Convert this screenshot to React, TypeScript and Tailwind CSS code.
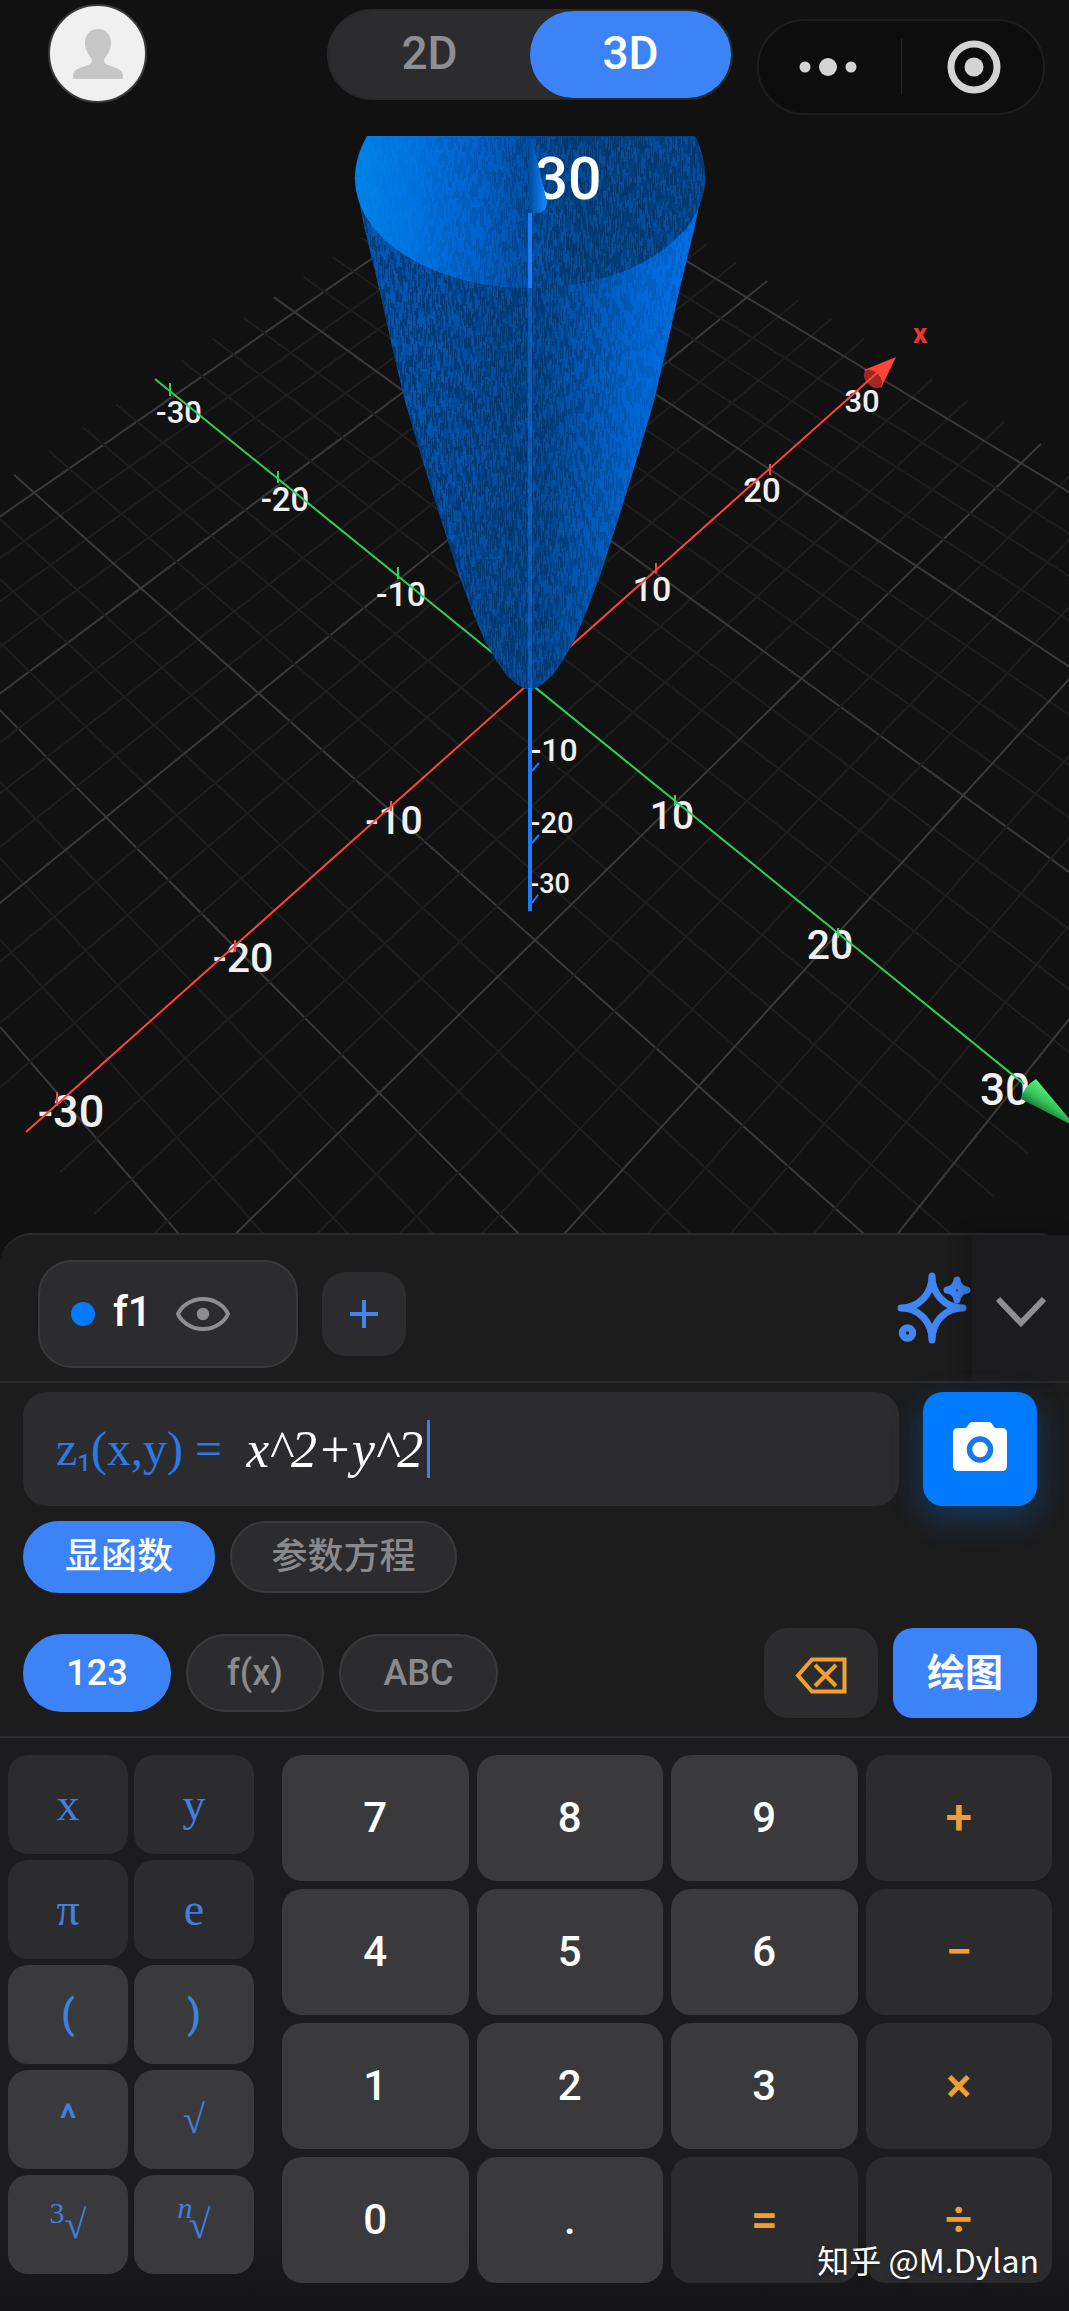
import { useState } from "react";
import clsx from "clsx";

type Key = { label: string; tone: "dark" | "light"; kind: "letter" | "sign" | "root"; sup?: string };

const symbolKeys: Key[] = [
  { label: "x", tone: "dark", kind: "letter" },
  { label: "y", tone: "dark", kind: "letter" },
  { label: "π", tone: "dark", kind: "letter" },
  { label: "e", tone: "dark", kind: "letter" },
  { label: "(", tone: "light", kind: "sign" },
  { label: ")", tone: "light", kind: "sign" },
  { label: "^", tone: "light", kind: "sign" },
  { label: "√", tone: "light", kind: "root" },
  { label: "√", tone: "light", kind: "root", sup: "3" },
  { label: "√", tone: "light", kind: "root", sup: "n" },
];

const numberKeys = ["7", "8", "9", "+", "4", "5", "6", "−", "1", "2", "3", "×", "0", ".", "=", "÷"];
const operators = ["+", "−", "×", "÷", "="];

// ground plane point (X, Y, 0) to screen
function project(x: number, y: number) {
  const w = 1 + 0.0048 * x - 0.0052 * y;
  return [529 + (13.3 * x + 13.84 * y) / w, 686 + (-11.8 * x + 11.07 * y) / w];
}

const RANGE = 32;
const gridSteps = Array.from({ length: 25 }, (_, i) => (i - 12) * 2.5).filter((v) => v !== 0);

const axisLabels = [
  { text: "-30", x: 179, y: 412, size: 31 },
  { text: "-20", x: 285, y: 499, size: 33 },
  { text: "-10", x: 401, y: 594, size: 34 },
  { text: "30", x: 862, y: 401, size: 31 },
  { text: "20", x: 762, y: 490, size: 33 },
  { text: "10", x: 652, y: 589, size: 34 },
  { text: "-10", x: 554, y: 749, size: 32 },
  { text: "-20", x: 552, y: 823, size: 29 },
  { text: "-30", x: 550, y: 883, size: 27 },
  { text: "-10", x: 394, y: 820, size: 39 },
  { text: "-20", x: 243, y: 957, size: 41 },
  { text: "-30", x: 71, y: 1111, size: 45 },
  { text: "10", x: 672, y: 815, size: 39 },
  { text: "20", x: 830, y: 944, size: 41 },
  { text: "30", x: 1005, y: 1089, size: 44 },
];

// half width of the paraboloid at a given height
const profile = [
  [177, 175], [228, 165], [294, 149], [348, 137], [403, 124], [457, 108], [515, 90],
  [574, 71], [614, 56], [640, 45], [661, 33], [675, 23], [684, 13], [688, 6], [690, 0],
];

const body =
  "M" +
  profile.map(([y, w]) => `${529.5 - w} ${y}`).join("L") +
  "L" +
  [...profile].reverse().map(([y, w]) => `${529.5 + w} ${y}`).join("L") +
  "Z";
const opening = "M367 136C359 150 355 164 355 178C355 239 433 288 530 288C627 288 705 239 705 178C705 162 701 148 695 136Z";

function noise(n: number) {
  const s = Math.sin(n * 127.1 + 11.7) * 43758.5453;
  return s - Math.floor(s);
}

const streaks = Array.from({ length: 176 }, (_, i) => ({
  x: 355 + i * 2,
  dash: Array.from({ length: 8 }, (_, j) => Math.round(3 + noise(i * 8 + j) * 20)).join(" "),
  offset: Math.round(noise(i + 3000) * 90),
}));

function Plot() {
  return (
    <svg viewBox="0 136 1069 1097" className="block w-full" role="img" aria-label="z = x^2 + y^2">
      <defs>
        <linearGradient id="outer" x1="0" x2="1">
          <stop offset="0" stopColor="#0052ac" />
          <stop offset="0.25" stopColor="#004a9a" />
          <stop offset="0.45" stopColor="#003f80" />
          <stop offset="0.54" stopColor="#004388" />
          <stop offset="0.66" stopColor="#0056b0" />
          <stop offset="0.8" stopColor="#0066d4" />
          <stop offset="1" stopColor="#0072ec" />
        </linearGradient>
        <linearGradient id="inner" x1="0" x2="1">
          <stop offset="0" stopColor="#0084ea" />
          <stop offset="0.2" stopColor="#0072e0" />
          <stop offset="0.36" stopColor="#0061cc" />
          <stop offset="0.5" stopColor="#004c9c" />
          <stop offset="0.65" stopColor="#003f7c" />
          <stop offset="1" stopColor="#004288" />
        </linearGradient>
        {/* streaks fade out on the lit side */}
        <linearGradient id="outerFade" gradientUnits="userSpaceOnUse" x1="355" x2="705">
          <stop offset="0" stopColor="#fff" stopOpacity="0.7" />
          <stop offset="0.5" stopColor="#fff" stopOpacity="0.7" />
          <stop offset="0.8" stopColor="#fff" stopOpacity="0.2" />
        </linearGradient>
        <linearGradient id="innerFade" gradientUnits="userSpaceOnUse" x1="355" x2="705">
          <stop offset="0.15" stopColor="#fff" stopOpacity="0.05" />
          <stop offset="0.4" stopColor="#fff" stopOpacity="0.3" />
          <stop offset="0.6" stopColor="#fff" stopOpacity="0.7" />
        </linearGradient>
        <linearGradient id="cone" x1="0" x2="1">
          <stop offset="0" stopColor="#004a9c" />
          <stop offset="0.9" stopColor="#1284ff" />
        </linearGradient>
        <linearGradient id="yCone" gradientUnits="userSpaceOnUse" x1="1048" y1="1088" x2="1034" y2="1110">
          <stop offset="0" stopColor="#5be884" />
          <stop offset="0.5" stopColor="#34c759" />
          <stop offset="1" stopColor="#17692c" />
        </linearGradient>
        <mask id="outerMask">
          <path d={body} fill="url(#outerFade)" />
        </mask>
        <mask id="innerMask">
          <path d={opening} fill="url(#innerFade)" />
        </mask>
        <g id="streaks" strokeWidth="2">
          {streaks.map((s) => (
            <g key={s.x}>
              <line x1={s.x} x2={s.x} y1="137" y2="690" stroke="#00356a" strokeDasharray={s.dash} strokeDashoffset={s.offset} />
              <line x1={s.x + 1} x2={s.x + 1} y1="137" y2="690" strokeWidth="1" stroke="#0a68cc" strokeDasharray={s.dash} strokeDashoffset={s.offset + 35} />
            </g>
          ))}
        </g>
      </defs>

      {gridSteps.map((v) => {
        const major = v % 10 === 0;
        const [ax, ay] = project(v, -RANGE);
        const [bx, by] = project(v, RANGE);
        const [cx, cy] = project(-RANGE, v);
        const [dx, dy] = project(RANGE, v);
        return (
          <g key={v} stroke={major ? "#3a3a3a" : "#1f1f1f"} strokeWidth="2">
            <line x1={ax} y1={ay} x2={bx} y2={by} />
            <line x1={cx} y1={cy} x2={dx} y2={dy} />
          </g>
        );
      })}

      <g fill="#f0f0f0" fontFamily="Roboto, sans-serif" fontWeight="500" textAnchor="middle">
        {axisLabels.map((l) => (
          <text key={`${l.x}-${l.y}`} x={l.x} y={l.y + l.size * 0.36} fontSize={l.size}>
            {l.text}
          </text>
        ))}
        <text x="920" y="343" fontSize="28" fontWeight="700" fill="#e8382f">x</text>
      </g>

      <path d="M896 357L864 370L881 388Z" fill="#ff453a" />
      <ellipse cx="873" cy="379" rx="7" ry="11" transform="rotate(-45 873 379)" fill="#9e2922" />
      <g stroke="#ff453a" strokeWidth="2">
        <line x1="26" y1="1132" x2="878" y2="372" />
        {[[656, 563, 573], [770, 464, 475], [391, 801, 811], [235, 940, 952], [57, 1092, 1106]].map(([x, y1, y2]) => (
          <line key={x} x1={x} y1={y1} x2={x} y2={y2} />
        ))}
      </g>

      <g stroke="#30d158" strokeWidth="2">
        <line x1="155" y1="379" x2="1024" y2="1084" />
        {[[170, 383, 396], [278, 471, 483], [398, 567, 579], [675, 795, 806], [838, 928, 938]].map(([x, y1, y2]) => (
          <line key={x} x1={x} y1={y1} x2={x} y2={y2} />
        ))}
      </g>
      <path d="M1036 1079Q1024 1086 1021 1099L1076 1127Z" fill="url(#yCone)" />

      <path d={body} fill="url(#outer)" />
      <use href="#streaks" mask="url(#outerMask)" />
      <path d={opening} fill="url(#inner)" />
      <use href="#streaks" mask="url(#innerMask)" />

      <text x="568" y="199" fontSize="59" fontWeight="500" fill="#fff" fontFamily="Roboto, sans-serif" textAnchor="middle">30</text>
      <path d="M529 138L532 138L547 202Q547 212 538 213L529 213Z" fill="url(#cone)" />
      <g stroke="#1a7bff" strokeWidth="4">
        <line x1="530" y1="213" x2="530" y2="288" />
        <line x1="530" y1="288" x2="530" y2="688" opacity="0.4" />
        <line x1="530" y1="688" x2="530" y2="911" />
      </g>
      <path d="M532 771l7-8M532 843l7-8M532 903l6-8" stroke="#1a7bff" strokeWidth="2" />
    </svg>
  );
}

function TopBar() {
  const [mode, setMode] = useState("3D");
  return (
    <header className="flex h-[136px] items-start gap-6 pr-6 pl-12">
      <button aria-label="Profile" className="mt-1 flex size-[99px] items-center justify-center rounded-full border-2 border-[#3a3a3c] bg-[#f0f0f0]">
        <svg viewBox="0 0 50 50" className="size-[50px]" fill="#c6c6c6">
          <path d="M25 0C17 0 12 6 12 14c0 6 3 11 6 15 2 3 0 6-3 7C7 39 0 40 0 47v3h50v-3c0-7-7-8-15-11-3-1-5-4-3-7 3-4 6-9 6-15C38 6 33 0 25 0Z" />
        </svg>
      </button>
      <div className="mt-[9px] ml-auto flex h-[91px] w-[406px] rounded-full border-2 border-[#29292b] bg-[#2c2c2e]">
        {["2D", "3D"].map((m) => (
          <button
            key={m}
            onClick={() => setMode(m)}
            className={clsx(
              "flex-1 rounded-full pb-1 text-[46px] leading-none font-medium",
              mode === m ? "bg-[#3c83f8] text-white" : "text-[#8e8e93]"
            )}
          >
            {m}
          </button>
        ))}
      </div>
      <div className="mt-[19px] flex h-24 w-72 items-center rounded-full border-2 border-[#1e1e1e] bg-[#0d0d0d]">
        <button aria-label="More" className="flex h-full flex-1 items-center justify-center pr-1">
          <svg viewBox="0 0 58 20" className="h-5 w-[58px]" fill="#d4d4d4">
            <circle cx="6" cy="10" r="5.5" />
            <circle cx="29" cy="10" r="9" />
            <circle cx="52" cy="10" r="5.5" />
          </svg>
        </button>
        <span className="h-14 w-px bg-[#2a2a2a]" />
        <button aria-label="Close" className="flex h-full flex-1 items-center justify-center pl-1">
          <svg viewBox="0 0 54 54" className="size-[54px]">
            <circle cx="27" cy="27" r="23" fill="none" stroke="#d4d4d4" strokeWidth="7" />
            <circle cx="27" cy="27" r="9.5" fill="#d4d4d4" />
          </svg>
        </button>
      </div>
    </header>
  );
}

function FunctionTabs() {
  return (
    <div className="flex h-[150px] items-center rounded-t-[32px] border-y-2 border-[#2c2c2e]">
      <div className="mt-3 ml-[38px] flex h-[108px] w-[260px] items-center rounded-[34px] border-2 border-[#39393b] bg-[#2c2c2e] pl-[31px]">
        <span className="size-6 rounded-full bg-[#007aff]" />
        <span className="ml-[18px] pb-1 text-[42px] leading-none font-medium text-white">f1</span>
        <button aria-label="Toggle visibility" className="ml-6">
          <svg viewBox="0 0 54 34" className="h-[34px] w-[54px]">
            <path d="M2 17C5 10 14 2 27 2s22 8 25 15C49 24 40 32 27 32S5 24 2 17Z" fill="none" stroke="#8e8e90" strokeWidth="4" strokeLinejoin="round" />
            <circle cx="27" cy="17" r="6.2" fill="#8e8e90" />
          </svg>
        </button>
      </div>
      <button aria-label="Add function" className="mt-3 ml-6 flex size-[84px] items-center justify-center rounded-3xl bg-[#2c2c2e]">
        <svg viewBox="0 0 28 28" className="size-7" stroke="#4484f0" strokeWidth="4">
          <path d="M14 0v28M0 14h28" />
        </svg>
      </button>
      <button aria-label="AI assistant" className="ml-auto">
        <svg viewBox="0 0 75 72" className="h-[72px] w-[75px]" fill="none" stroke="#4285f4" strokeWidth="7" strokeLinejoin="round" strokeLinecap="round">
          <path d="M35 4C35 22 22 36 4 36C22 36 35 50 35 68C35 50 48 36 66 36C48 36 35 22 35 4Z" />
          <path d="M60 8Q59 17 50 18Q59 19 60 28Q61 19 70 18Q61 17 60 8Z" />
          <circle cx="10.500" cy="61" r="5.200" />
        </svg>
      </button>
      <button aria-label="Collapse" className="flex h-full w-[97px] items-center justify-center bg-[#1c1c1e] pt-2 shadow-[-8px_0_16px_rgba(0,0,0,0.25)]">
        <svg viewBox="0 0 52 32" className="h-8 w-[52px]" fill="none" stroke="#8e8e93" strokeWidth="6">
          <path d="M3 3l23 24L49 3" />
        </svg>
      </button>
    </div>
  );
}

function Pill({ label, active, className, onClick }: { label: string; active: boolean; className: string; onClick: () => void }) {
  return (
    <button
      onClick={onClick}
      className={clsx(
        "rounded-full border-2 text-4xl font-medium",
        active ? "border-[#3c83f8] bg-[#3c83f8] text-white" : "border-[#3a3a3c] bg-[#2c2c2e] text-[#8a8a8c]",
        className
      )}
    >
      {label}
    </button>
  );
}

function Editor() {
  const [kind, setKind] = useState("显函数");
  const [expr, setExpr] = useState("x^2+y^2");
  return (
    <div className="px-[23px] pt-[9px]">
      <div className="flex gap-6 pr-[9px]">
        <div className="flex h-[114px] flex-1 items-center rounded-3xl bg-[#2c2c2e] pl-[33px] font-['Liberation_Serif',serif]">
          <label htmlFor="expr" className="text-5xl leading-none whitespace-pre text-[#2a7ae8]">
            z<sub className="font-['Roboto',sans-serif] text-2xl font-medium">1</sub>(x,y) =
          </label>
          <input
            id="expr"
            value={expr}
            onChange={(e) => setExpr(e.target.value)}
            className="ml-6 field-sizing-content bg-transparent text-[52px] leading-none text-white italic outline-none"
          />
          <span className="ml-1 h-[58px] w-[3px] bg-[#3f7fe8]" />
        </div>
        <button aria-label="Scan formula" className="flex size-[114px] items-center justify-center rounded-[20px] bg-[#007aff] pb-1 shadow-[0_12px_32px_rgba(0,122,255,0.3)]">
          <svg viewBox="0 0 54 50" className="h-[50px] w-[54px]">
            <path d="M19 0h17q2 0 3 2l3 4h7q5 0 5 5v33q0 5-5 5H5q-5 0-5-5V11q0-5 5-5h8l3-4q1-2 3-2Z" fill="#fff" />
            <circle cx="27" cy="27.500" r="10.500" fill="none" stroke="#1678ee" strokeWidth="5.500" />
          </svg>
        </button>
      </div>
      <div className="mt-[15px] flex gap-[15px]">
        <Pill label="显函数" active={kind === "显函数"} onClick={() => setKind("显函数")} className="h-[72px] w-48" />
        <Pill label="参数方程" active={kind === "参数方程"} onClick={() => setKind("参数方程")} className="h-[72px] w-[227px]" />
      </div>
    </div>
  );
}

function KeyboardTabs() {
  const [tab, setTab] = useState("123");
  return (
    <div className="mt-[35px] flex h-[110px] items-start border-b-2 border-[#2c2c2e] pr-8 pl-[23px]">
      <div className="mt-1.5 flex gap-[15px]">
        <Pill label="123" active={tab === "123"} onClick={() => setTab("123")} className="h-[78px] w-[148px]" />
        <Pill label="f(x)" active={tab === "f(x)"} onClick={() => setTab("f(x)")} className="h-[78px] w-[138px]" />
        <Pill label="ABC" active={tab === "ABC"} onClick={() => setTab("ABC")} className="h-[78px] w-[159px]" />
      </div>
      <button aria-label="Backspace" className="ml-auto flex h-[90px] w-[114px] items-center justify-center rounded-3xl bg-[#2c2c2e] pt-1">
        <svg viewBox="0 0 52 37" className="h-[37px] w-[52px]" fill="none" stroke="#f0a030" strokeWidth="4">
          <path d="M17 2.500H49.500V34.500H17L3 18.500Z" />
          <path d="M20 8L41 29M41 8L20 29" />
        </svg>
      </button>
      <button className="ml-[15px] h-[90px] w-36 rounded-[20px] bg-[#3c83f8] text-[38px] font-bold text-white">绘图</button>
    </div>
  );
}

function Keypad() {
  return (
    <div className="flex items-start gap-7 bg-linear-to-b from-[#1c1c1e] from-85% to-[#151517] pt-[17px] pr-[17px] pb-7 pl-2">
      <div className="grid w-[246px] grid-cols-2 gap-1.5">
        {symbolKeys.map((k, i) => (
          <button
            key={i}
            className={clsx(
              "h-[99px] rounded-[20px] leading-none text-[#4080e0]",
              k.tone === "dark" ? "bg-[#2c2c2e]" : "bg-[#3a3a3c]",
              k.kind === "letter" && "font-['Liberation_Serif',serif] text-[46px]",
              k.kind === "sign" && "text-[40px] font-medium",
              k.kind === "root" && "font-['Liberation_Serif',serif] text-[40px]"
            )}
          >
            {k.sup && (
              <sup className={clsx("text-[30px]", k.sup === "n" && "-mr-1 -top-5 italic")}>{k.sup}</sup>
            )}
            {k.label}
          </button>
        ))}
      </div>
      <div className="grid flex-1 grid-cols-4 gap-2">
        {numberKeys.map((k) => {
          const op = operators.includes(k);
          return (
            <button
              key={k}
              className={clsx(
                "h-[126px] rounded-[20px] leading-none font-medium",
                op ? "bg-[#2c2c2e] text-5xl text-[#f0a030]" : "bg-[#3a3a3c] text-[42px] text-white"
              )}
            >
              {k}
            </button>
          );
        })}
      </div>
    </div>
  );
}

export default function App() {
  return (
    <main className="relative min-h-screen overflow-hidden bg-[#111111] font-['Roboto','Noto_Sans_CJK_SC',sans-serif]">
      <TopBar />
      <Plot />
      <section className="rounded-t-[32px] bg-[#1c1c1c]">
        <FunctionTabs />
        <Editor />
        <KeyboardTabs />
        <Keypad />
      </section>
      <p className="absolute right-[30px] bottom-[30px] font-['Noto_Sans_CJK_SC',sans-serif] text-[32px] leading-[44px] text-white text-shadow-lg">
        知乎 @M.Dylan
      </p>
    </main>
  );
}
